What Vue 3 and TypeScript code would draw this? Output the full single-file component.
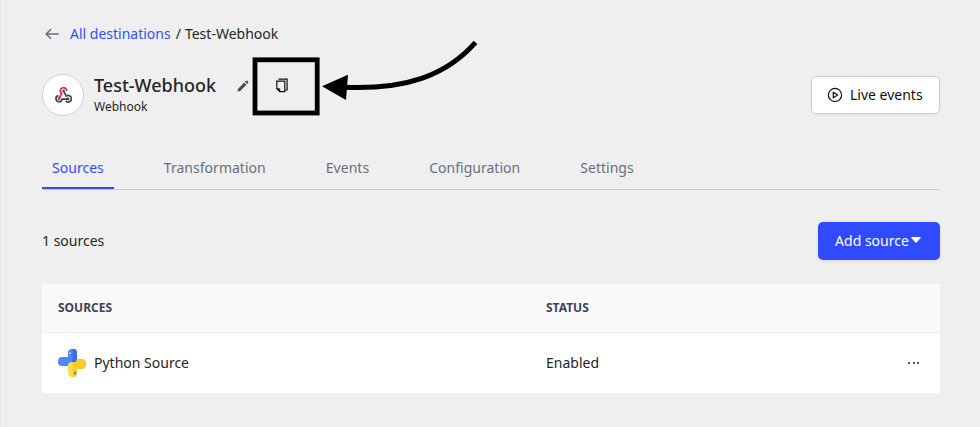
<script setup lang="ts">
import { ref } from 'vue'

interface Source {
  name: string
  status: string
}

const tabs: string[] = ['Sources', 'Transformation', 'Events', 'Configuration', 'Settings']
const activeTab = ref('Sources')
const sources: Source[] = [{ name: 'Python Source', status: 'Enabled' }]
</script>

<template>
  <main class="page">
    <nav class="breadcrumb">
      <svg class="back" width="14" height="12" viewBox="0 0 14 12" fill="none" stroke="#667085" stroke-width="1.6">
        <path d="M13.8 6H1.2M6 1.2L1.2 6L6 10.8" />
      </svg>
      <a class="link">All destinations</a>
      <span class="slash">/</span>
      <span>Test-Webhook</span>
    </nav>

    <header class="header">
      <div class="avatar">
        <svg width="17" height="16" viewBox="0 0 16 15" fill="none" stroke-width="1.6">
          <path stroke="#f0185a" d="M11 3.8A3 3 0 1 0 6.2 6.1L3.8 10.8" />
          <path stroke="#37474f" d="M8 3.6L10.6 8.6A3 3 0 1 1 10.2 13" />
          <path stroke="#37474f" d="M3.2 8.1A2.9 2.9 0 1 0 6.7 11.3H12.2" />
          <circle cx="8" cy="3.7" r="1.2" fill="#37474f" />
          <circle cx="3.8" cy="11.2" r="1.3" fill="#f0185a" />
          <circle cx="12.3" cy="11.2" r="1.3" fill="#37474f" />
        </svg>
      </div>
      <div class="identity">
        <h1>Test-Webhook</h1>
        <p>Webhook</p>
      </div>
      <svg class="pencil" width="12" height="12" viewBox="0 0 12 12" fill="#4c4c4c">
        <path d="M.5 11.5L.9 8.9L7.3 2.5L9.5 4.7L3.1 11.1ZM8 1.8L8.9.9Q9.7.2 10.5 1L11 1.5Q11.8 2.3 11.1 3.1L10.2 4Z" />
      </svg>
      <svg class="copy" width="12" height="15" viewBox="0 0 12 15" fill="none" stroke="#111">
        <path stroke-width="1.2" d="M.8 3.1H8.8V13.7H3.8L.8 10.8Z" />
        <path fill="#111" stroke-width=".6" d="M.8 10.7H3.9V13.8Z" />
        <path stroke-width="1.2" d="M2.5 1.1H11.1V12H9" />
      </svg>
      <button class="live">
        <svg width="16" height="16" viewBox="0 0 16 16" fill="none" stroke="#161616" stroke-width="1.25">
          <circle cx="8" cy="8" r="6.6" />
          <path stroke-linejoin="round" d="M6.3 5.2L10.6 8L6.3 10.8Z" />
        </svg>
        <span>Live events</span>
      </button>
    </header>

    <div class="tabs">
      <button
        v-for="tab in tabs"
        :key="tab"
        class="tab"
        :class="{ active: tab === activeTab }"
        @click="activeTab = tab"
      >{{ tab }}</button>
    </div>

    <div class="toolbar">
      <span>{{ sources.length }} sources</span>
      <button class="add">
        <span>Add source</span>
        <svg width="10" height="6" viewBox="0 0 10 6" fill="#fff"><path d="M.7 0H9.3Q10 .3 9.6 .9L5.6 5.6Q5 6.1 4.4 5.6L.4 .9Q0 .3 .7 0Z" /></svg>
      </button>
    </div>

    <section class="table">
      <div class="row head">
        <span>SOURCES</span>
        <span>STATUS</span>
      </div>
      <div v-for="source in sources" :key="source.name" class="row">
        <div class="source">
          <svg width="28" height="28" viewBox="0 0 28 28">
            <path fill="#5286f8" d="M10 8V4Q10 0 14 0H16Q19 0 19 4V10Q19 13.5 15.5 13.5H13Q10 13.5 10 17H4Q0 17 0 12.5Q0 8 4 8Z" />
            <path fill="#366af0" d="M14.5 0H15.5Q19 0 19 4V10Q19 13.5 15.5 13.5H14.5V6H10V5H14.5Z" />
            <path fill="#ffdc54" d="M10 28V17Q10 13.5 13 13.5H15Q19 13.5 19 10H24Q28 10 28 15Q28 20 24 20H19V24Q19 28 15 28H14Q10 28 10 24Z" />
            <path fill="#ffcb2b" d="M19 10H24Q28 10 28 15Q28 20 24 20H19V24Q19 28 15 28H14.5V13.5H15.5Q19 13.5 19 10Z" />
            <circle cx="12" cy="4.5" r="1.1" fill="#ffdc54" />
            <circle cx="17" cy="24" r="1.2" fill="#4285d8" />
          </svg>
          <span>{{ source.name }}</span>
        </div>
        <span>{{ source.status }}</span>
        <button class="more" aria-label="More actions">
          <i /><i /><i />
        </button>
      </div>
    </section>

    <svg class="annotation" width="240" height="90" viewBox="250 35 240 90" fill="none" stroke="#000">
      <rect x="255" y="59.8" width="62.2" height="53.2" stroke-width="4.8" />
      <path stroke-width="5" d="M345 87.3C405 89.5 446 76 475.5 42.3" />
      <path fill="#000" stroke="none" d="M322 86.2L348 74.8L346 100Z" />
    </svg>
  </main>
</template>

<style>
body {
  background: #efefef;
}
</style>

<style scoped>
.page {
  position: relative;
  box-sizing: border-box;
  height: 427px;
  padding: 24px 40px 0 41px;
  border-left: 1px solid #e8e8e8;
  background: #efefef;
  color: #262626;
  font: 14px/20px "Noto Sans", sans-serif;
}
button {
  padding: 0;
  border: 0;
  background: none;
  font: inherit;
  color: inherit;
}
.breadcrumb {
  display: flex;
  align-items: center;
  height: 20px;
}
.back {
  margin: 0 11px 0 3px;
}
.link {
  color: #3150f6;
}
.slash {
  margin: 0 4px 0 5px;
}
.header {
  display: flex;
  height: 42px;
  margin-top: 30px;
}
.avatar {
  box-sizing: border-box;
  display: flex;
  align-items: center;
  justify-content: center;
  width: 42px;
  height: 42px;
  padding-left: 1px;
  border: 1px solid #cfd4dc;
  border-radius: 50%;
  background: #fff;
}
.identity {
  margin-left: 10px;
}
h1 {
  margin: 0;
  font-size: 18px;
  line-height: 22px;
  font-weight: 500;
}
p {
  margin: 2px 0 0;
  font-size: 12px;
  line-height: 18px;
}
.pencil {
  margin: 6px 0 0 21px;
}
.copy {
  margin: 4px 0 0 27px;
}
.live {
  box-sizing: border-box;
  display: flex;
  align-items: center;
  gap: 7px;
  width: 129px;
  height: 38px;
  margin: 2px 0 0 auto;
  padding-left: 15px;
  border: 1px solid #c9d0d8;
  border-radius: 5px;
  background: #fff;
  box-shadow: 0 1px 3px rgba(0, 0, 0, 0.06);
  color: #111;
}
.live svg {
  margin-bottom: 1px;
}
.tabs {
  display: flex;
  gap: 40px;
  height: 41px;
  margin-top: 32px;
  border-bottom: 1px solid #c9cbcc;
}
.tab {
  box-sizing: border-box;
  height: 41px;
  padding: 1px 10px 0;
  border-bottom: 2px solid transparent;
  color: #687080;
  letter-spacing: 0.025px;
}
.tab.active {
  border-bottom-color: #304bfd;
  color: #304bfd;
}
.toolbar {
  display: flex;
  align-items: center;
  justify-content: space-between;
  height: 38px;
  margin-top: 32px;
}
.add {
  box-sizing: border-box;
  display: flex;
  align-items: center;
  justify-content: center;
  gap: 2px;
  width: 122px;
  height: 38px;
  padding-right: 2px;
  border-radius: 5px;
  background: #304bfd;
  box-shadow: 0 1px 4px rgba(0, 0, 0, 0.08);
  color: #fff;
}
.add svg {
  margin-bottom: 2px;
}
.table {
  margin-top: 24px;
  background: #fff;
}
.row {
  display: grid;
  grid-template-columns: 488px 1fr 12px;
  align-items: center;
  box-sizing: border-box;
  height: 60px;
  padding: 0 20px 0 16px;
}
.head {
  height: 49px;
  border-bottom: 1px solid #ececec;
  background: #f9f9f9;
  color: #3d4453;
  font-size: 12px;
  font-weight: 700;
}
.source {
  display: flex;
  align-items: center;
  gap: 8px;
}
.more {
  display: flex;
  justify-content: space-between;
  padding-right: 1px;
}
.more i {
  width: 2px;
  height: 2px;
  background: #555;
}
.annotation {
  position: absolute;
  top: 35px;
  left: 249px;
}
</style>
